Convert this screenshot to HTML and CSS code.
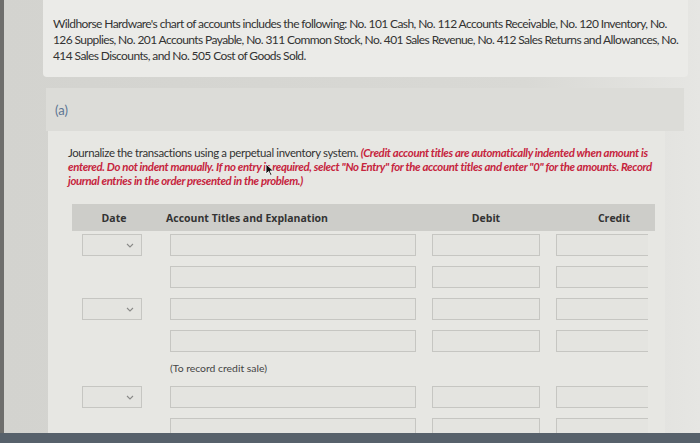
FILE: index.html
```html
<!DOCTYPE html>
<html lang="en">
<head>
    <meta charset="UTF-8">
    <title>Journal entries</title>
    <link rel="stylesheet" href="styles.css">
</head>
<body>

    <div class="screen">
        <div class="intro">
            Wildhorse Hardware's chart of accounts includes the following: No. 101 Cash, No. 112 Accounts Receivable, No. 120 Inventory, No.<br>
            126 Supplies, No. 201 Accounts Payable, No. 311 Common Stock, No. 401 Sales Revenue, No. 412 Sales Returns and Allowances, No.<br>
            414 Sales Discounts, and No. 505 Cost of Goods Sold.
        </div>

        <div class="part">
            <div class="part-head">(a)</div>
            <div class="part-body">
                <p class="instructions">
                    Journalize the transactions using a perpetual inventory system. <em>(Credit account titles are automatically indented when amount is<br>
                    entered. Do not indent manually. If no entry is required, select "No Entry" for the account titles and enter "0" for the amounts. Record<br>
                    journal entries in the order presented in the problem.)</em>
                    <svg class="cursor" width="9" height="13" viewBox="0 0 9 13"><path d="M1 1 L1 11 L3.5 8.5 L5.5 12.5 L7 11.8 L5 8 L8.5 8 Z" fill="#111" stroke="#fff" stroke-width="0.8"/></svg>
                </p>

                <div class="journal">
                    <div class="journal-head">
                        <span class="col-date">Date</span>
                        <span class="col-account">Account Titles and Explanation</span>
                        <span class="col-debit">Debit</span>
                        <span class="col-credit">Credit</span>
                    </div>

                    <div class="entry-row">
                        <div class="date-select"><svg width="8" height="5" viewBox="0 0 8 5"><polyline points="1,1 4,4 7,1" fill="none" stroke="#8a8a88" stroke-width="1.1"/></svg></div>
                        <div class="field"></div>
                        <div class="field"></div>
                        <div class="field open"></div>
                    </div>
                    <div class="entry-row">
                        <div></div>
                        <div class="field"></div>
                        <div class="field"></div>
                        <div class="field open"></div>
                    </div>
                    <div class="entry-row">
                        <div class="date-select"><svg width="8" height="5" viewBox="0 0 8 5"><polyline points="1,1 4,4 7,1" fill="none" stroke="#8a8a88" stroke-width="1.1"/></svg></div>
                        <div class="field"></div>
                        <div class="field"></div>
                        <div class="field open"></div>
                    </div>
                    <div class="entry-row">
                        <div></div>
                        <div class="field"></div>
                        <div class="field"></div>
                        <div class="field open"></div>
                    </div>
                    <div class="explanation">(To record credit sale)</div>
                    <div class="entry-row">
                        <div class="date-select"><svg width="8" height="5" viewBox="0 0 8 5"><polyline points="1,1 4,4 7,1" fill="none" stroke="#8a8a88" stroke-width="1.1"/></svg></div>
                        <div class="field"></div>
                        <div class="field"></div>
                        <div class="field open"></div>
                    </div>
                    <div class="entry-row">
                        <div></div>
                        <div class="field"></div>
                        <div class="field"></div>
                        <div class="field open"></div>
                    </div>
                </div>
            </div>
        </div>
    </div>

    <div class="bottom-bar"></div>

</body>
</html>
```

FILE: styles.css
```css
body {
    margin: 0;
    height: 443px;
    overflow: hidden;
    background: #d7d7d3;
    font-family: Lato, "Open Sans", sans-serif;
    color: #333;
}
.screen {
    height: 433px;
    overflow: hidden;
    border-left: 4px solid #6e6e6c;
    padding: 0 12px 0 39px;
    background: linear-gradient(to right, #d3d3cf 0, #d9d9d5 75%, #e6e6e3 100%);
}
.intro {
    background: #ebebe8;
    padding: 16px 10px 13px 10px;
    font-size: 12px;
    line-height: 16px;
    letter-spacing: -0.6px;
    white-space: nowrap;
    border-radius: 0 0 4px 4px;
}
.part {
    margin: 11px 4px 0 3px;
}
.part-head {
    background: #dcdcd8;
    height: 43px;
    display: flex;
    align-items: center;
    padding-left: 9px;
    font-size: 13px;
    color: #5c7593;
}
.part-body {
    background: #e7e7e3;
    margin: 0 19px 0 2px;
    padding: 15px 0 0 20px;
    height: 330px;
}
.instructions {
    position: relative;
    margin: 0;
    font-size: 11.4px;
    line-height: 14px;
    letter-spacing: -0.35px;
    white-space: nowrap;
}
.instructions em {
    color: #c6243d;
    font-weight: bold;
}
.cursor {
    position: absolute;
    left: 197px;
    top: 17px;
}
.journal {
    margin: 16px 0 0 4px;
    width: 583px;
}
.journal-head,
.entry-row {
    display: grid;
    grid-template-columns: 72px 246px 108px 92px;
    column-gap: 16px;
    padding-left: 10px;
}
.journal-head {
    background: #cdcdc9;
    height: 27px;
    align-items: center;
    font-family: "Open Sans", sans-serif;
    font-weight: 700;
    font-size: 10.5px;
    color: #333;
}
.journal-head .col-date { width: 60px; text-align: center; margin-left: 2px; }
.journal-head .col-account { margin-left: -4px; }
.journal-head .col-debit { text-align: center; }
.journal-head .col-credit { text-align: right; margin-right: 18px; }
.entry-row {
    margin: 3px 0 10px;
    height: 22px;
}
.field {
    border: 1px solid #c6c6c2;
    background: #e4e4e0;
}
.field.open {
    border-right: none;
}
.date-select {
    width: 60px;
    box-sizing: border-box;
    border: 1px solid #c6c6c2;
    background: #e4e4e0;
    display: flex;
    align-items: center;
    justify-content: flex-end;
    padding-right: 7px;
}
.explanation {
    padding-left: 98px;
    font-size: 10.4px;
    color: #444;
    height: 21px;
    line-height: 12px;
    margin-top: 8px;
}
.bottom-bar {
    height: 10px;
    background: #57616b;
}
```
